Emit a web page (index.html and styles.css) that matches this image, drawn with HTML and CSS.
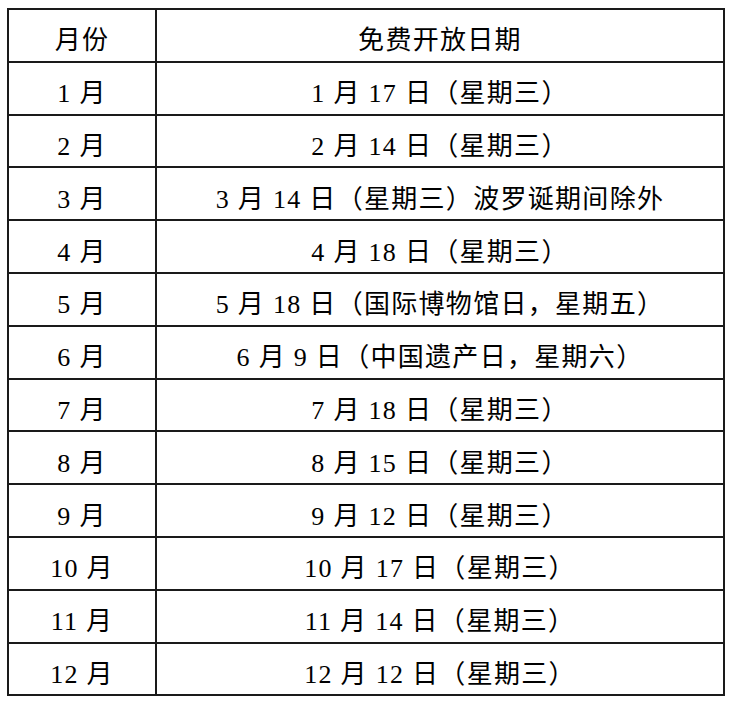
FILE: index.html
```html
<!DOCTYPE html>
<html lang="zh-CN">
<head>
<meta charset="utf-8">
<title>免费开放日期</title>
<link rel="stylesheet" href="styles.css">
</head>
<body>
<table class="schedule">
  <tr><td class="month">月份</td><td class="date">免费开放日期</td></tr>
  <tr><td class="month">1 月</td><td class="date">1 月 17 日（星期三）</td></tr>
  <tr><td class="month">2 月</td><td class="date">2 月 14 日（星期三）</td></tr>
  <tr><td class="month">3 月</td><td class="date">3 月 14 日（星期三）波罗诞期间除外</td></tr>
  <tr><td class="month">4 月</td><td class="date">4 月 18 日（星期三）</td></tr>
  <tr><td class="month">5 月</td><td class="date">5 月 18 日（国际博物馆日，星期五）</td></tr>
  <tr><td class="month">6 月</td><td class="date">6 月 9 日（中国遗产日，星期六）</td></tr>
  <tr><td class="month">7 月</td><td class="date">7 月 18 日（星期三）</td></tr>
  <tr><td class="month">8 月</td><td class="date">8 月 15 日（星期三）</td></tr>
  <tr><td class="month">9 月</td><td class="date">9 月 12 日（星期三）</td></tr>
  <tr><td class="month">10 月</td><td class="date">10 月 17 日（星期三）</td></tr>
  <tr><td class="month">11 月</td><td class="date">11 月 14 日（星期三）</td></tr>
  <tr><td class="month">12 月</td><td class="date">12 月 12 日（星期三）</td></tr>
</table>
</body>
</html>
```
FILE: styles.css
```css
html, body {
  margin: 0;
  padding: 0;
  background: #ffffff;
}

body {
  padding: 8px 0 0 7px;
  font-family: "Liberation Serif", "Noto Sans CJK SC", serif;
  color: #000000;
}

.schedule {
  border-collapse: collapse;
  width: 718px;
  table-layout: fixed;
}

.schedule tr {
  height: 52.8px;
}

.schedule td {
  border: 2px solid #1a1a1a;
  text-align: center;
  vertical-align: middle;
  font-size: 26px;
  line-height: 1;
  letter-spacing: 1.3px;
  padding: 12px 0 0 0;
  white-space: nowrap;
}

.schedule .month {
  width: 146px;
}
```
